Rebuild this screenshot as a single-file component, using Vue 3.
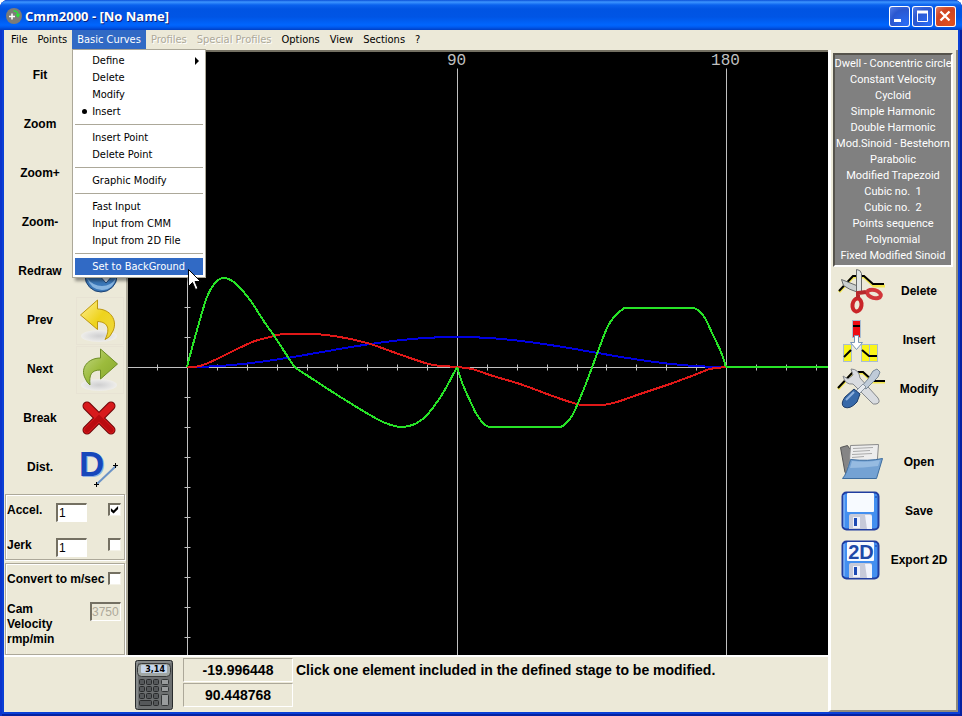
<script setup>
  import { ref } from 'vue';

  const menus = [
    { label: 'File' },
    { label: 'Points' },
    { label: 'Basic Curves', open: true },
    { label: 'Profiles', disabled: true },
    { label: 'Special Profiles', disabled: true },
    { label: 'Options' },
    { label: 'View' },
    { label: 'Sections' },
    { label: '?' }
  ];

  const menuGroups = [
    ['Define', 'Delete', 'Modify', 'Insert'],
    ['Insert Point', 'Delete Point'],
    ['Graphic Modify'],
    ['Fast Input', 'Input from CMM', 'Input from 2D File'],
    ['Set to BackGround']
  ];

  const tools = ['Fit', 'Zoom', 'Zoom+', 'Zoom-', 'Redraw', 'Prev', 'Next', 'Break', 'Dist.'];

  const laws = [
    'Dwell - Concentric circle',
    'Constant Velocity',
    'Cycloid',
    'Simple Harmonic',
    'Double Harmonic',
    'Mod.Sinoid - Bestehorn',
    'Parabolic',
    'Modified Trapezoid',
    'Cubic no.\u00a0 1',
    'Cubic no.\u00a0 2',
    'Points sequence',
    'Polynomial',
    'Fixed Modified Sinoid'
  ];

  const editActions = ['Delete', 'Insert', 'Modify'];
  const fileActions = ['Open', 'Save', 'Export 2D'];

  const accel = ref('1');
  const jerk = ref('1');
  const velocity = ref('3750');
  const showAccel = ref(true);
  const showJerk = ref(false);
  const metric = ref(false);

  // graph: 3px per degree, origin at 0 degrees
  const xTicks = Array.from({ length: 60 }, (_, i) => (i - 1) * 30).filter((x) => x !== 0);
  const yTicks = Array.from({ length: 40 }, (_, i) => (i - 10) * 30).filter((y) => y !== 0);

  // Catmull-Rom through the sampled points
  function smooth(points) {
    let d = `M${points[0][0]} ${points[0][1]}`;
    for (let i = 0; i < points.length - 1; i++) {
      const a = points[i - 1] || points[i];
      const b = points[i];
      const c = points[i + 1];
      const e = points[i + 2] || c;
      d += `C${b[0] + (c[0] - a[0]) / 6} ${b[1] + (c[1] - a[1]) / 6}`;
      d += ` ${c[0] - (e[0] - b[0]) / 6} ${c[1] - (e[1] - b[1]) / 6} ${c[0]} ${c[1]}`;
    }
    return d;
  }

  const space = smooth(
    Array.from({ length: 55 }, (_, i) => [i * 10, -15 * (1 - Math.cos((i * Math.PI) / 27))])
  );

  const speed = smooth([
    [0, 0], [13, -1], [30, -8], [50, -18], [68, -26], [83, -30], [97, -33], [128, -33],
    [153, -30], [180, -24], [206, -15], [226, -8], [246, -2], [270, 0], [285, 2], [306, 9],
    [333, 17], [360, 27], [380, 34], [395, 38], [416, 38], [430, 35], [453, 27], [483, 17],
    [510, 7], [523, 2], [539, 0]
  ]);

  const accelRise = smooth([
    [0, 0], [5, -19], [12, -44], [20, -70], [28, -84], [37, -89], [48, -84], [63, -67],
    [78, -44], [86, -33], [99, -13], [108, 0], [121, 9], [155, 31], [190, 52], [204, 58],
    [215, 60], [228, 57], [240, 48], [256, 26], [270, 0]
  ]);

  const accelReturn = [
    smooth([[270, 0], [276, 18], [285, 38], [290, 48], [297, 57], [302, 60]]),
    smooth([[302, 60], [373, 60]]),
    smooth([
      [373, 60], [377, 58], [385, 49], [391, 36], [400, 14], [410, -13], [420, -39],
      [427, -50], [437, -59]
    ]),
    smooth([[437, -59], [507, -59]]),
    smooth([[507, -59], [512, -56], [518, -49], [526, -32], [534, -15], [539, 0]]),
    'M539 0H2000'
  ].join('');
</script>

<template>
  <div class="window">
    <header class="titlebar">
      <svg class="app-icon" width="16" height="16" viewBox="0 0 16 16">
        <circle cx="8" cy="8" r="8" fill="#7c7c78" />
        <path d="M3 8.500h6M6 5.500v6" stroke="#fff" stroke-width="1.500" />
        <path d="M7.500 3q4-.5 4.500 4M10 6.500l2 2 1.500-2.500" fill="none" stroke="#2fdc3a" stroke-width="1.500" />
      </svg>
      <h1 class="title">Cmm2000 - [No Name]</h1>
      <button class="caption" aria-label="Minimize">
        <svg width="21" height="21"><path d="M5 14.500h7" stroke="#fff" stroke-width="3" /></svg>
      </button>
      <button class="caption" aria-label="Maximize">
        <svg width="21" height="21">
          <path d="M5.500 6v9.500h10V6" fill="none" stroke="#fff" />
          <path d="M5 6h11" stroke="#fff" stroke-width="3" />
        </svg>
      </button>
      <button class="caption close" aria-label="Close">
        <svg width="21" height="21"><path d="M5.500 5.500l9 9M14.500 5.500l-9 9" stroke="#fff" stroke-width="2.300" /></svg>
      </button>
    </header>

    <nav class="menubar">
      <div v-for="menu in menus" :key="menu.label" class="menu">
        <button class="menu-title" :class="{ open: menu.open }" :disabled="menu.disabled">{{ menu.label }}</button>
        <div v-if="menu.open" class="dropdown">
          <div v-for="(group, g) in menuGroups" :key="g" class="group">
            <button
              v-for="item in group"
              :key="item"
              class="item"
              :class="{ active: item === 'Set to BackGround' }"
            >
              <span class="mark"><i v-if="item === 'Insert'" class="bullet"></i></span>
              <span class="item-label">{{ item }}</span>
              <i v-if="item === 'Define'" class="arrow"></i>
            </button>
          </div>
          <svg class="cursor" width="13" height="22" viewBox="0 0 13 22">
            <path d="M.5.5v17l4-4 3 7 2.500-1-3-7h5.500z" fill="#fff" stroke="#000" />
          </svg>
        </div>
      </div>
    </nav>

    <div class="workspace">
      <div class="main">
        <div class="body">
          <aside class="sidebar">
            <button v-for="tool in tools" :key="tool" class="tool">
              <span class="tool-label">{{ tool }}</span>
              <span class="tool-icon" :class="{ framed: tool === 'Prev' || tool === 'Next' }">
                <svg v-if="tool === 'Redraw'" width="48" height="48" viewBox="0 0 48 48">
                  <circle cx="25" cy="28" r="16" fill="#3a77b8" stroke="#1d4272" />
                  <path d="M11 30q4 12 15 12t14-12q-5 8-14 8t-15-8z" fill="#86b4e0" />
                  <path d="M22 26h4v-4h8v4h4l-8 9z" fill="#d5e0ea" stroke="#1d4272" />
                </svg>
                <svg v-else-if="tool === 'Prev' || tool === 'Next'" width="48" height="48" viewBox="0 0 48 48">
                  <defs>
                    <radialGradient :id="'shade' + tool">
                      <stop offset="0" stop-color="#cfcfd0" />
                      <stop offset=".55" stop-color="#e0e0e0" />
                      <stop offset="1" stop-color="#efeeea" />
                    </radialGradient>
                    <linearGradient :id="'arrow' + tool" x1="0" x2="1" y2="1">
                      <stop offset="0" :stop-color="tool === 'Prev' ? '#fff099' : '#c5d989'" />
                      <stop offset=".5" :stop-color="tool === 'Prev' ? '#eed31c' : '#9cbb3c'" />
                      <stop offset="1" :stop-color="tool === 'Prev' ? '#efd842' : '#84a62b'" />
                    </linearGradient>
                  </defs>
                  <ellipse cx="23" cy="39" rx="18" ry="6" :fill="`url(#shade${tool})`" />
                  <path
                    v-if="tool === 'Prev'"
                    d="M4.500 18L21.500 3v9C34 12 42 23 37 34q-3 7-8 8.500C34 33 33 25 21.500 24.500v8z"
                    :fill="`url(#arrow${tool})`"
                    stroke="#bd970e"
                  />
                  <path
                    v-else
                    d="M41.500 18L24.500 3v9C12 12 4 22 9 32q2 5 5 7C13 29 15 24 24.500 24v9z"
                    :fill="`url(#arrow${tool})`"
                    stroke="#6d8d24"
                  />
                </svg>
                <svg v-else-if="tool === 'Break'" width="48" height="48" viewBox="0 0 48 48">
                  <path d="M11 11l24 24M35 11L11 35" stroke="#6d0508" stroke-width="9" stroke-linecap="round" />
                  <path d="M11 11l24 24M35 11L11 35" stroke="#d71a1c" stroke-width="7" stroke-linecap="round" />
                  <path d="M11 35l12-12 12 12" fill="none" stroke="#b90c10" stroke-width="5" stroke-linecap="round" />
                </svg>
                <svg v-else-if="tool === 'Dist.'" width="48" height="48" viewBox="0 0 48 48">
                  <text x="4" y="33" class="glyph-d shadow">D</text>
                  <text x="3" y="32" class="glyph-d">D</text>
                  <path d="M21 40l19-18" stroke="#6b93c6" stroke-width="2" />
                  <path d="M18 40.500h5M20.500 38v5M37 21.500h5M39.500 19v5" stroke="#000" />
                </svg>
              </span>
            </button>

            <fieldset class="box">
              <div class="field">
                <label class="name" for="accel">Accel.</label>
                <input id="accel" v-model="accel" class="edit" type="text" />
                <input v-model="showAccel" class="tick" type="checkbox" aria-label="Show accel." />
              </div>
              <div class="field">
                <label class="name" for="jerk">Jerk</label>
                <input id="jerk" v-model="jerk" class="edit" type="text" />
                <input v-model="showJerk" class="tick" type="checkbox" aria-label="Show jerk" />
              </div>
            </fieldset>

            <fieldset class="box velocity">
              <div class="convert">
                <label for="metric">Convert to m/sec</label>
                <input id="metric" v-model="metric" class="tick" type="checkbox" />
              </div>
              <div class="cam">
                <label for="cam">Cam<br />Velocity<br />rmp/min</label>
                <input id="cam" v-model="velocity" class="edit" type="text" disabled />
              </div>
            </fieldset>
          </aside>

          <svg class="graph">
            <g transform="translate(59.500 315.500)">
              <g class="axes">
                <path d="M0-299V1000M270-299V1000M539-299V1000M-60 0H2000" />
                <path v-for="x in xTicks" :key="'x' + x" :d="`M${x > 400 ? x - 1 : x}-3v6`" />
                <path v-for="y in yTicks" :key="'y' + y" :d="`M-3 ${y}h6`" />
              </g>
              <text x="269" y="-303" class="degree">90</text>
              <text x="538" y="-303" class="degree">180</text>
            </g>
            <g transform="translate(59 315)">
              <path :d="space" class="curve space" />
              <path :d="speed" class="curve speed" />
              <path :d="accelRise" class="curve accel" />
              <path :d="accelReturn" class="curve accel" />
            </g>
          </svg>
        </div>

        <footer class="status">
          <button class="calc" aria-label="Calculator">
            <svg width="38" height="50" viewBox="0 0 38 50">
              <rect x=".5" y=".5" width="37" height="49" rx="2" fill="#6d7071" stroke="#292c2d" />
              <path d="M2 48V2h34" fill="none" stroke="#9fa3a3" />
              <rect x="2.500" y="3.500" width="33" height="13" rx="4" fill="#a0a6a3" stroke="#37393a" />
              <rect x="6" y="5" width="26" height="8" rx="1" fill="#c5d5ea" />
              <text x="30" y="12" class="calc-text">3,14</text>
              <g fill="#55585a" stroke="#292b2c">
                <rect v-for="n in 9" :key="n" :x="4.5 + ((n - 1) % 3) * 7" :y="19.5 + Math.floor((n - 1) / 3) * 7" width="5" height="5" rx="1" />
                <rect x="4.500" y="40.500" width="12" height="5" rx="1" />
                <rect x="18.500" y="40.500" width="5" height="5" rx="1" />
              </g>
              <g fill="#999c9d" stroke="#333637">
                <rect x="26.500" y="19.500" width="7" height="5" rx="1" />
                <rect x="26.500" y="26.500" width="7" height="5" rx="1" />
                <rect x="26.500" y="34.500" width="7" height="11" rx="1" />
              </g>
            </svg>
          </button>
          <div class="coords">
            <output class="coord">-19.996448</output>
            <output class="coord">90.448768</output>
          </div>
          <p class="hint">Click one element included in the defined stage to be modified.</p>
        </footer>
      </div>

      <aside class="panel">
        <ul class="laws">
          <li v-for="law in laws" :key="law" class="law">{{ law }}</li>
        </ul>

        <div class="actions">
          <button v-for="action in editActions" :key="action" class="action">
            <svg v-if="action === 'Delete'" width="48" height="48" viewBox="0 0 48 48">
              <path d="M2 24L16 9l11 0 10 9h11" fill="none" stroke="#f3e74c" stroke-width="3" />
              <path d="M2 23L16 8h11l9 8h11" fill="none" stroke="#000" stroke-width="2" />
              <path d="M4.500 11.500l20 8-3 5q-10-3-15-7z" fill="#cbd0cf" stroke="#686b6b" />
              <path d="M19.500 1.500q4 0 5 4v20h-5z" fill="#e1e5e4" stroke="#686b6b" />
              <ellipse cx="20" cy="37" rx="4.500" ry="6.500" transform="rotate(8 20 37)" fill="none" stroke="#c92529" stroke-width="4" />
              <ellipse cx="37" cy="26" rx="7" ry="4" transform="rotate(15 37 26)" fill="none" stroke="#d1363a" stroke-width="4" />
              <path d="M21 30v-5l8-1" fill="none" stroke="#b7282b" stroke-width="4" />
            </svg>
            <svg v-else-if="action === 'Insert'" width="48" height="48" viewBox="0 0 48 48">
              <g stroke="#a9bdd1" fill="#faf51a">
                <rect x="6.500" y="27.500" width="8" height="17" />
                <rect x="24.500" y="27.500" width="8" height="17" />
                <rect x="32.500" y="27.500" width="8" height="17" />
                <rect x="15.500" y="3.500" width="8" height="17" fill="#ef0b12" />
              </g>
              <path d="M16 9h7M7 40l7-7M25 33l7 6h8" fill="none" stroke="#000" stroke-width="2" />
              <path d="M17.500 18.500h4v7h4l-6 7-6-7h4z" fill="#fff" stroke="#7895b5" />
            </svg>
            <svg v-else width="48" height="48" viewBox="0 0 48 48">
              <path d="M1 23L16 7h10l10 9h12" fill="none" stroke="#f3e74c" stroke-width="3" />
              <path d="M1 22L16 6h10l10 9h12" fill="none" stroke="#000" stroke-width="2" />
              <path d="M6 10l5 3 5-4-2-6q8 0 9 9l18 20q3 5-2 6-3 1-5-2L16 18q-8 1-10-8z" fill="#d9dce0" stroke="#85888c" />
              <path d="M36 5l4-2 3 3-2 5-6 6-6 6-4-3 6-7z" fill="#bfcbd8" stroke="#798998" />
              <path d="M26 18l3 3-7 7-3-3z" fill="#e5e9ee" stroke="#8a95a0" />
              <path d="M17 23l6 5-3 8q-7 8-13 5-4-3 1-10z" fill="#3769a9" stroke="#1d3c69" />
              <path d="M17 26l-8 8" stroke="#91b3df" stroke-width="2" />
            </svg>
            <span class="action-label">{{ action }}</span>
          </button>
        </div>

        <div class="actions">
          <button v-for="action in fileActions" :key="action" class="action">
            <svg v-if="action === 'Open'" width="48" height="48" viewBox="0 0 48 48">
              <path d="M3.500 8.500l7-2 2 3 26-3-3 27H8z" fill="#858585" stroke="#555" />
              <path d="M13.500 6.500l28-1-2 27-31 3 4-14z" fill="#ededed" stroke="#8a8a8a" />
              <path d="M16 9.500l20-1M16 12.500l17-1M15 15.500l20-1M15 18.500l12-1" stroke="#aaa" />
              <path d="M13.500 20.500q18 2 32-1l-6 20H5.500q4-4 8-19z" fill="#74a2d3" stroke="#3d6d9f" />
              <path d="M15 22q16 2 28-1l-2 6q-15 2-28 2z" fill="#96bbe1" />
            </svg>
            <svg v-else width="48" height="48" viewBox="0 0 48 48">
              <rect x="5.500" y="4.500" width="36" height="37" rx="4" fill="#438ff0" stroke="#203da0" stroke-width="2" />
              <path d="M7 7v32" stroke="#9bc7ff" />
              <rect x="10" y="5" width="27" height="19" rx="1" fill="#f7faff" />
              <path d="M12 41V28q0-2 2-2h19q2 0 2 2v13z" fill="#c7cad9" />
              <path d="M28 27h5q2 0 2 2v12h-5z" fill="#f1f3fb" />
              <path d="M16 29h7v11h-7z" fill="#eef1fb" />
              <path d="M17 30h3v8h-3z" fill="#1d49b3" />
              <path d="M38 9h2" stroke="#173b9c" />
              <text v-if="action === 'Export 2D'" x="24" y="22" class="glyph-2d">2D</text>
            </svg>
            <span class="action-label">{{ action }}</span>
          </button>
        </div>
      </aside>
    </div>
  </div>
</template>

<style>
  body {
    background: #fff;
  }
</style>

<style scoped>
  .window {
    display: flex;
    flex-direction: column;
    box-sizing: border-box;
    min-height: 100vh;
    padding: 0 4px 4px;
    background: #0a3fd6;
    box-shadow: inset 2px 0 #0b34cc, inset -2px 0 #0521a0, inset 0 -2px #0521a0;
    border-radius: 8px 8px 0 0;
    font: bold 12px/15px "Liberation Sans", Arial, sans-serif;
    color: #000;
  }

  button {
    border: 0;
    margin: 0;
    padding: 0;
    background: none;
    color: inherit;
    font: inherit;
  }

  svg {
    display: block;
  }

  .titlebar {
    display: flex;
    align-items: center;
    gap: 2px;
    height: 30px;
    margin: 0 -4px;
    padding: 2px 6px 0;
    box-sizing: border-box;
    border-radius: 8px 8px 0 0;
    background: linear-gradient(#0a4fd8 0, #3d95ff 2px, #0a62ee 5px, #0054e3 9px, #0055e5 17px, #0066fe 25px, #005bf0 27px, #003fc4 30px);
  }

  .title {
    flex: 1;
    margin: 0 0 0 1px;
    color: #fff;
    font: bold 13px/18px "Open Sans", sans-serif;
    text-shadow: 1px 1px #0b1f7a;
  }

  .caption {
    width: 21px;
    height: 21px;
    box-sizing: border-box;
    border-radius: 3px;
    background: radial-gradient(circle at 80% 85%, #2a6cf5, #2b57cf 60%, #5d85ec);
    box-shadow: inset 0 0 0 1px #fff;

    &.close {
      background: radial-gradient(circle at 75% 80%, #e0501f, #cf4422 60%, #e58a72);
    }
  }

  .menubar {
    display: flex;
    height: 20px;
    padding-left: 2px;
    background: #ece9d8;
    font: 11px/18px "DejaVu Sans Condensed", "DejaVu Sans", sans-serif;
  }

  .menu {
    position: relative;
  }

  .menu-title {
    height: 19px;
    padding: 0 5px;

    &.open {
      background: #316ac5;
      color: #fff;
    }

    &:disabled {
      color: #aca899;
      text-shadow: 1px 1px #fff;
    }
  }

  .dropdown {
    position: absolute;
    top: 19px;
    left: 0;
    z-index: 2;
    width: 134px;
    box-sizing: border-box;
    padding: 2px;
    border: 1px solid #aca899;
    background: #fff;
    box-shadow: 3px 3px 3px rgba(0, 0, 0, 0.4);
  }

  .group + .group {
    margin-top: 4px;
    padding-top: 4px;
    border-top: 1px solid #aca899;
  }

  .item {
    display: flex;
    align-items: center;
    width: 100%;
    height: 17px;
    padding-right: 4px;
    text-align: left;

    &.active {
      background: #316ac5;
      color: #fff;
    }
  }

  .mark {
    width: 17px;
  }

  .item-label {
    flex: 1;
    white-space: nowrap;
  }

  .bullet {
    display: block;
    width: 5px;
    height: 5px;
    margin-left: 7px;
    border-radius: 50%;
    background: #000;
  }

  .arrow {
    border: solid transparent;
    border-width: 4px 0 4px 4px;
    border-left-color: #000;
  }

  .cursor {
    position: absolute;
    right: 4px;
    bottom: -14px;
  }

  .workspace {
    flex: 1;
    display: flex;
    background: #ece9d8;
  }

  .main {
    flex: 1;
    min-width: 0;
    display: flex;
    flex-direction: column;
  }

  .body {
    flex: 1;
    display: flex;
  }

  .sidebar {
    width: 122px;
    flex: none;
    padding-top: 1px;
    border-right: 2px solid #aca899;
  }

  .tool {
    display: flex;
    align-items: center;
    width: 100%;
    height: 49px;
  }

  .tool-label {
    width: 72px;
  }

  .tool-icon {
    width: 48px;
    height: 48px;
    box-sizing: border-box;

    &.framed {
      box-shadow: inset 0 0 0 1px #e8e3d4;
    }

    svg {
      overflow: visible;
    }
  }

  .glyph-d {
    font: bold 35px "Liberation Sans", sans-serif;
    fill: #1747bb;

    &.shadow {
      fill: #8fb0e4;
    }
  }

  .glyph-2d {
    font: bold 20px "Liberation Sans", sans-serif;
    fill: #1d49a8;
    text-anchor: middle;
  }

  .box {
    margin: 2px 1px 3px;
    padding: 8px 3px 0 1px;
    min-width: 0;
    height: 66px;
    box-sizing: border-box;
    border: 1px solid #aca899;
    box-shadow: inset 1px 1px #fff, 1px 1px #fff;

    &.velocity {
      height: 92px;
      margin-bottom: 0;
    }
  }

  .field {
    display: flex;
    align-items: flex-start;
    height: 35px;

    .name {
      width: 49px;
    }
  }

  .edit {
    width: 31px;
    height: 19px;
    box-sizing: border-box;
    margin: 0;
    padding: 0 0 0 1px;
    border: 2px solid #747062;
    border-right: 1px solid #fff;
    border-bottom: 1px solid #fff;
    border-radius: 0;
    background: #fff;
    color: #000;
    font: 12px/15px "Liberation Sans", sans-serif;

    &:disabled {
      padding: 0;
      background: #ece9d8;
      color: #aca899;
    }
  }

  .tick {
    appearance: none;
    width: 13px;
    height: 13px;
    box-sizing: border-box;
    margin: 0 0 0 auto;
    border: 2px solid #747062;
    border-right: 1px solid #f4f2e8;
    border-bottom: 1px solid #f4f2e8;
    background: #fff;

    &:checked::after {
      content: "";
      display: block;
      width: 9px;
      height: 9px;
      background: #000;
      clip-path: polygon(10% 35%, 40% 60%, 90% 10%, 90% 45%, 40% 95%, 10% 70%);
    }
  }

  .convert {
    display: flex;
    white-space: nowrap;
  }

  .cam {
    display: flex;
    justify-content: space-between;
    align-items: flex-start;
    margin-top: 15px;
  }

  .graph {
    flex: 1;
    min-width: 0;
    border-top: 2px solid #747062;
    background: #000;
  }

  .axes path {
    stroke: #c0c0c0;
  }

  .degree {
    fill: #c0c0c0;
    font: 16px "Liberation Mono", monospace;
    text-anchor: middle;
  }

  .curve {
    fill: none;
    stroke-width: 2;
    shape-rendering: crispEdges;
  }

  .space {
    stroke: #0000e0;
  }

  .speed {
    stroke: #e01818;
  }

  .accel {
    stroke: #27e327;
  }

  .status {
    display: flex;
    align-items: flex-start;
    height: 57px;
    padding-left: 131px;
    box-sizing: border-box;
    border-top: 2px solid #fff;
    font-size: 14px;
  }

  .calc {
    margin-top: 3px;
  }

  .calc-text {
    font: bold 8px "DejaVu Sans", sans-serif;
    text-anchor: end;
  }

  .coords {
    margin: 1px 0 0 10px;
  }

  .coord {
    display: block;
    width: 110px;
    height: 24px;
    margin-bottom: 1px;
    box-sizing: border-box;
    border: 1px solid #aca899;
    border-right-color: #fff;
    border-bottom-color: #fff;
    line-height: 22px;
    text-align: center;
  }

  .hint {
    margin: 6px 0 0 3px;
    white-space: nowrap;
  }

  .panel {
    width: 130px;
    flex: none;
    padding: 3px 3px 0 2px;
    box-sizing: border-box;
    border: solid #fff;
    border-width: 0 2px 2px 3px;
    border-right-color: #8f8b7e;
    border-bottom-color: #8f8b7e;
  }

  .laws {
    margin: 0;
    padding: 1px 0;
    list-style: none;
    border: 2px solid #55534c;
    border-right-color: #fff;
    border-bottom-color: #fff;
    background: #808080;
    color: #fff;
    font: 11px/16px "Roboto", sans-serif;
  }

  .law {
    display: flex;
    justify-content: center;
    white-space: nowrap;
  }

  .actions {
    margin-bottom: 24px;
  }

  .action {
    display: flex;
    align-items: center;
    width: 100%;
    height: 49px;
    padding-left: 4px;
  }

  .action-label {
    flex: 1;
    white-space: nowrap;
  }
</style>
